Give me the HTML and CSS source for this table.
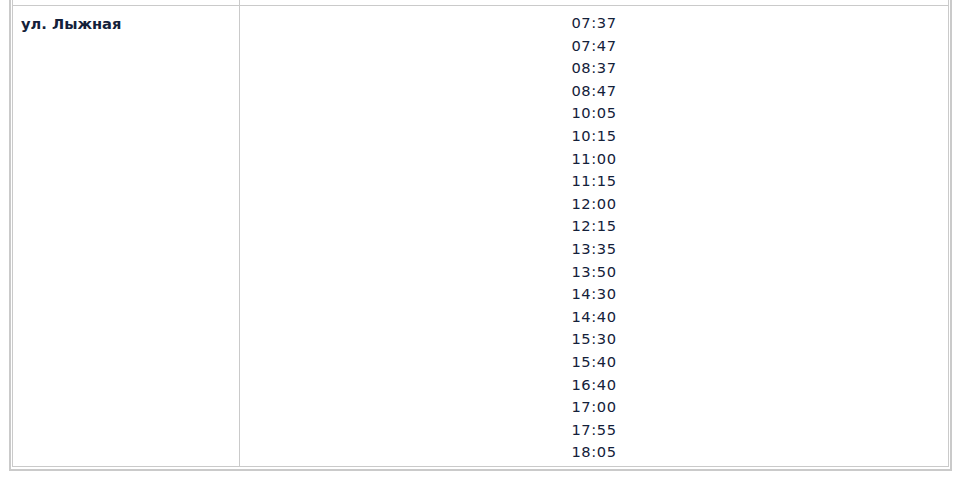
FILE: index.html
```html
<!DOCTYPE html>
<html lang="ru">
<head>
<meta charset="utf-8">
<title>Расписание</title>
<link rel="stylesheet" href="styles.css">
</head>
<body>
<div class="wrap">
<table class="sched">
  <tr class="prev">
    <td class="stop"><div class="spacer"></div></td>
    <td class="times"><div class="spacer"></div></td>
  </tr>
  <tr class="row">
    <td class="stop"><b>ул. Лыжная</b></td>
    <td class="times">
      <div>07:37</div>
      <div>07:47</div>
      <div>08:37</div>
      <div>08:47</div>
      <div>10:05</div>
      <div>10:15</div>
      <div>11:00</div>
      <div>11:15</div>
      <div>12:00</div>
      <div>12:15</div>
      <div>13:35</div>
      <div>13:50</div>
      <div>14:30</div>
      <div>14:40</div>
      <div>15:30</div>
      <div>15:40</div>
      <div>16:40</div>
      <div>17:00</div>
      <div>17:55</div>
      <div>18:05</div>
    </td>
  </tr>
</table>
</div>
</body>
</html>
```

FILE: styles.css
```css
html, body {
  margin: 0;
  padding: 0;
  background: #ffffff;
}
body {
  font-family: "DejaVu Sans", Verdana, sans-serif;
  font-size: 14.67px;
  color: #14213a;
  overflow: hidden;
}
.wrap {
  padding-left: 9px;
}
.sched {
  margin-top: -30px;
  width: 943px;
  border: 2px solid #cacaca;
  padding: 1px 1px 2px 1px;
  border-spacing: 0;
  border-collapse: separate;
}
.sched td {
  border-left: 1px solid #cacaca;
  border-top: 1px solid #cacaca;
  vertical-align: top;
}
.sched td.times {
  border-right: 1px solid #cacaca;
}
.prev td {
  padding: 0;
}
.spacer {
  height: 31px;
}
.row td {
  border-bottom: 1px solid #cacaca;
  padding: 7px 8px 1px 8px;
  line-height: 22.6px;
}
.row td.stop {
  width: 210px;
}
.row td.times {
  padding-top: 6px;
  padding-bottom: 2px;
  text-align: center;
  letter-spacing: 0.6px;
}
.stop b {
  font-weight: bold;
}
```
